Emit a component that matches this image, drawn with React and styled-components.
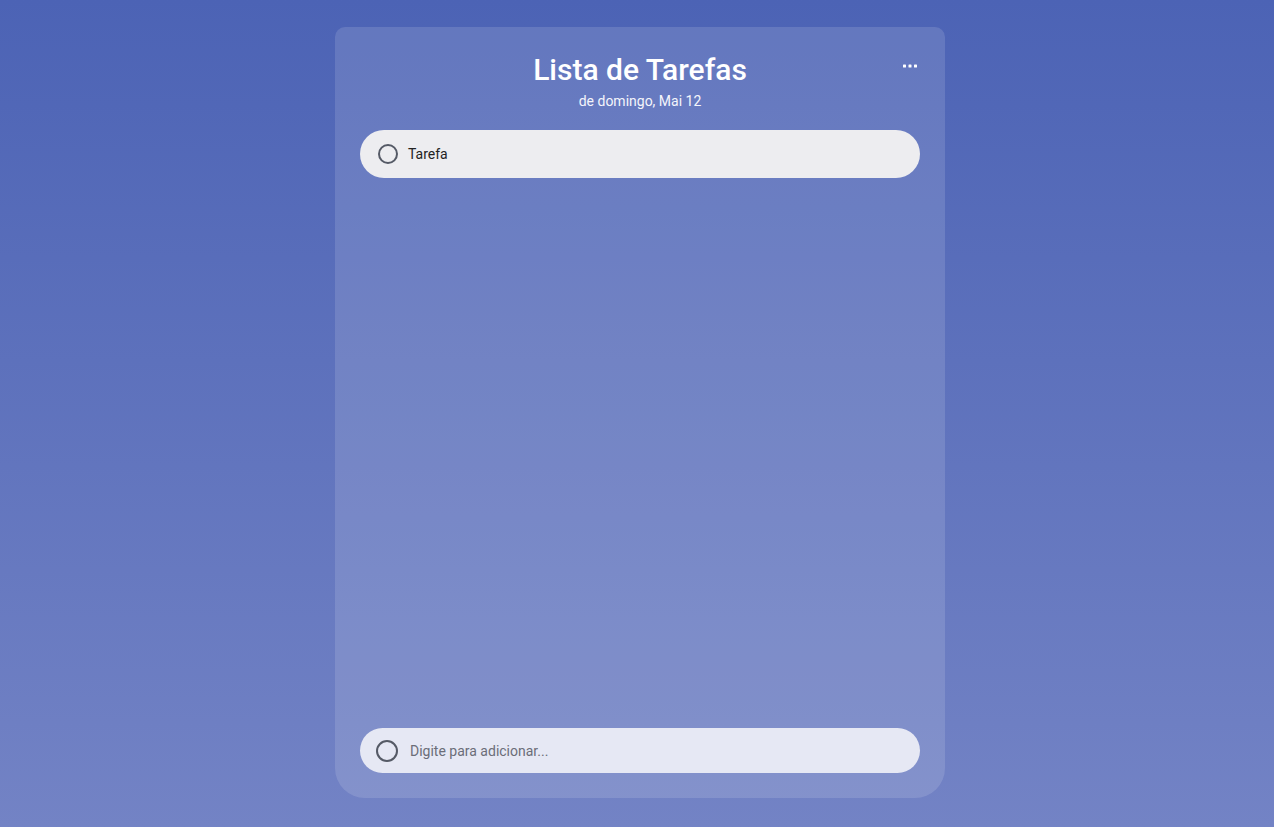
import React, { useState } from 'react'
import styled, { createGlobalStyle } from 'styled-components'

const Global = createGlobalStyle`
  html, body {
    margin: 0;
    padding: 0;
    height: 100%;
  }
  body {
    font-family: Roboto, "Liberation Sans", sans-serif;
    background: linear-gradient(180deg, #4c63b5 0%, #7383c5 100%);
    min-height: 827px;
  }
`

const Page = styled.main`
  display: flex;
  justify-content: center;
  padding: 27px 0 0 6px;
`

const Card = styled.section`
  width: 610px;
  height: 771px;
  box-sizing: border-box;
  padding: 25px 25px 25px;
  display: flex;
  flex-direction: column;
  background: rgba(255, 255, 255, 0.13);
  border-radius: 10px 10px 30px 30px;
`

const Header = styled.header`
  position: relative;
  text-align: center;
  color: #fff;
  margin-bottom: 19px;
`

const Title = styled.h1`
  margin: 0;
  font-size: 30px;
  line-height: 36px;
  font-weight: 500;
`

const Subtitle = styled.p`
  margin: 3px 0 0;
  font-size: 14px;
  line-height: 20px;
  color: #f4f5fb;
`

const MenuButton = styled.button`
  position: absolute;
  top: 10px;
  right: 1px;
  border: 0;
  background: none;
  padding: 2px;
  cursor: pointer;
  display: flex;
`

const List = styled.ul`
  list-style: none;
  margin: 0;
  padding: 0;
  flex: 1;
  display: flex;
  flex-direction: column;
  gap: 10px;
`

const Item = styled.li`
  height: 48px;
  display: flex;
  align-items: center;
  gap: 10px;
  padding: 0 18px;
  background: #ededf0;
  border-radius: 24px;
  font-size: 14px;
  color: #222;
`

const Check = styled.span`
  width: ${p => p.size}px;
  height: ${p => p.size}px;
  box-sizing: border-box;
  border: 2px solid #555a66;
  border-radius: 50%;
  flex-shrink: 0;
`

const AddBar = styled.form`
  height: 45px;
  display: flex;
  align-items: center;
  gap: 10px;
  padding: 0 16px;
  background: #e6e8f4;
  border-radius: 23px;
`

const AddInput = styled.input`
  flex: 1;
  border: 0;
  background: transparent;
  outline: none;
  font-family: inherit;
  font-size: 14px;
  color: #333;
  &::placeholder {
    color: #6b6d78;
  }
`

function Dots() {
  return (
    <svg width="14" height="4" viewBox="0 0 14 4">
      <rect x="0" y="0.5" width="3" height="3" rx="0.6" fill="#fff" />
      <rect x="5.5" y="0.5" width="3" height="3" rx="0.6" fill="#fff" />
      <rect x="11" y="0.5" width="3" height="3" rx="0.6" fill="#fff" />
    </svg>
  )
}

export default function App() {
  const [tasks] = useState(['Tarefa'])
  const [text, setText] = useState('')
  return (
    <Page>
      <Global />
      <Card>
        <Header>
          <Title>Lista de Tarefas</Title>
          <Subtitle>de domingo, Mai 12</Subtitle>
          <MenuButton aria-label="menu">
            <Dots />
          </MenuButton>
        </Header>
        <List>
          {tasks.map((t, i) => (
            <Item key={i}>
              <Check size={20} />
              {t}
            </Item>
          ))}
        </List>
        <AddBar onSubmit={e => e.preventDefault()}>
          <Check size={22} />
          <AddInput
            value={text}
            onChange={e => setText(e.target.value)}
            placeholder="Digite para adicionar..."
          />
        </AddBar>
      </Card>
    </Page>
  )
}
